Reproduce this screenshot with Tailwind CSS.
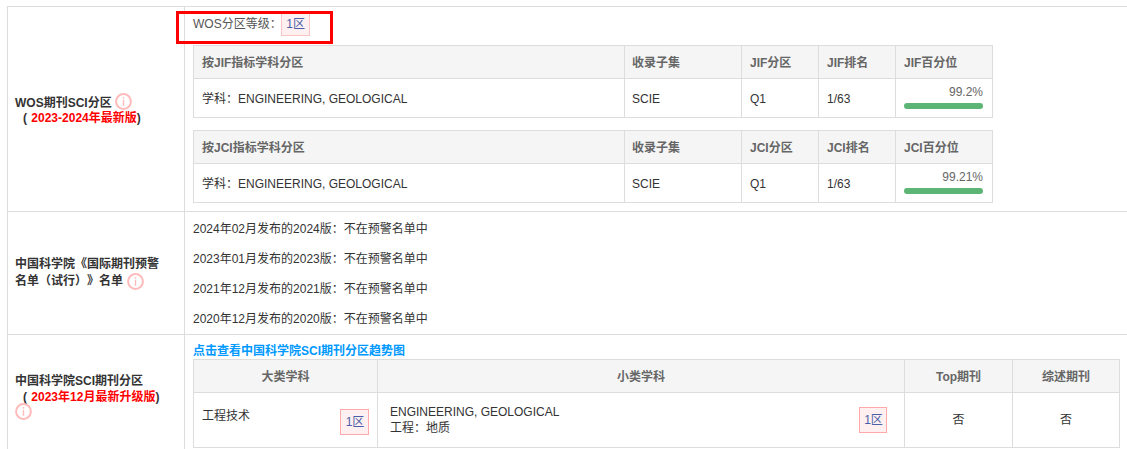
<!DOCTYPE html>
<html lang="zh"><head><meta charset="utf-8"><script src="https://cdn.jsdelivr.net/npm/@tailwindcss/browser@4"></script></head>
<body class="bg-white overflow-hidden h-[449px] text-[12px] text-[#333] font-['Liberation_Sans','Noto_Sans_CJK_SC',sans-serif]">
<div class="ml-[7px] pt-[6px]">
  <div class="flex h-[206px] border-y border-l border-[#ddd] box-border">
    <div class="w-[177px] shrink-0 border-r border-[#ddd] pl-[7px] flex flex-col justify-center font-bold leading-[16px] pt-[2px]">
      <div class="flex items-center">WOS期刊SCI分区<svg class="ml-[3px] -mt-[2px]" width="17" height="17" viewBox="0 0 17 17"><circle cx="8.5" cy="8.5" r="7.4" fill="none" stroke="#fbb" stroke-width="2"/><rect x="7.8" y="4" width="1.4" height="1.6" fill="#fbb"/><rect x="7.8" y="6.8" width="1.4" height="6" fill="#fbb"/></svg></div>
      <div class="pl-[8px] -mt-[1px]">( <span class="text-[#f00] ml-[1px]">2023-2024年最新版</span>)</div>
    </div>
    <div class="pl-[8px] flex-1 min-w-0">
      <div class="relative flex items-center h-[28px] mt-[3px] text-[#555]"><span>WOS分区等级：</span><span class="-ml-[1px] pl-[1px] border border-[#fbc4c4] bg-[#fef0f0] text-[#4b5fa8] h-[23px] w-[29px] flex items-center justify-center">1区</span>
        <div class="absolute left-[-17px] top-[1px] w-[157px] h-[33px] border-[3px] border-[#f00]"></div>
      </div>
      <div class="mt-[7px] w-[799px]">
        <table class="table-fixed border-collapse w-[799px]"><colgroup><col class="w-[431px]"><col class="w-[117px]"><col class="w-[77px]"><col class="w-[77px]"><col class="w-[97px]"></colgroup>
          <tr class="h-[33px] bg-[#f5f5f5] text-[#666] font-bold"><td class="border border-[#ddd] pl-[8px] pr-[7px] pt-[2px]">按JIF指标学科分区</td><td class="border border-[#ddd] px-[7px] pt-[2px]">收录子集</td><td class="border border-[#ddd] px-[8px] pt-[2px]">JIF分区</td><td class="border border-[#ddd] px-[8px] pt-[2px]">JIF排名</td><td class="border border-[#ddd] px-[8px] pt-[2px]">JIF百分位</td></tr>
          <tr class="h-[39px]"><td class="border border-[#ddd] pl-[8px] pr-[7px] pt-[2px]">学科：ENGINEERING, GEOLOGICAL</td><td class="border border-[#ddd] px-[7px] pt-[2px]">SCIE</td><td class="border border-[#ddd] px-[8px] pt-[2px]">Q1</td><td class="border border-[#ddd] px-[8px] pt-[2px]">1/63</td><td class="border border-[#ddd] pl-[8px] pr-[9px]"><div class="text-right text-[#666] leading-[14px] -mt-[3px]">99.2%</div><div class="h-[6px] mt-[4px] rounded-[3px] bg-[#5cb574] w-[79px]"></div></td></tr>
        </table>
        <table class="table-fixed border-collapse w-[799px] mt-[12px]"><colgroup><col class="w-[431px]"><col class="w-[117px]"><col class="w-[77px]"><col class="w-[77px]"><col class="w-[97px]"></colgroup>
          <tr class="h-[33px] bg-[#f5f5f5] text-[#666] font-bold"><td class="border border-[#ddd] pl-[8px] pr-[7px] pt-[2px]">按JCI指标学科分区</td><td class="border border-[#ddd] px-[7px] pt-[2px]">收录子集</td><td class="border border-[#ddd] px-[8px] pt-[2px]">JCI分区</td><td class="border border-[#ddd] px-[8px] pt-[2px]">JCI排名</td><td class="border border-[#ddd] px-[8px] pt-[2px]">JCI百分位</td></tr>
          <tr class="h-[39px]"><td class="border border-[#ddd] pl-[8px] pr-[7px] pt-[2px]">学科：ENGINEERING, GEOLOGICAL</td><td class="border border-[#ddd] px-[7px] pt-[2px]">SCIE</td><td class="border border-[#ddd] px-[8px] pt-[2px]">Q1</td><td class="border border-[#ddd] px-[8px] pt-[2px]">1/63</td><td class="border border-[#ddd] pl-[8px] pr-[9px]"><div class="text-right text-[#666] leading-[14px] -mt-[3px]">99.21%</div><div class="h-[6px] mt-[4px] rounded-[3px] bg-[#5cb574] w-[79px]"></div></td></tr>
        </table>
      </div>
    </div>
  </div>
  <div class="flex h-[123px] border-b border-l border-[#ddd] box-border">
    <div class="w-[177px] shrink-0 border-r border-[#ddd] pl-[7px] flex flex-col justify-center font-bold leading-[17px] [text-spacing-trim:space-all]">
      <div>中国科学院《国际期刊预警</div>
      <div class="flex items-center">名单（试行）》名单<svg class="ml-[4px]" width="17" height="17" viewBox="0 0 17 17"><circle cx="8.5" cy="8.5" r="7.4" fill="none" stroke="#fbb" stroke-width="2"/><rect x="7.8" y="4" width="1.4" height="1.6" fill="#fbb"/><rect x="7.8" y="6.8" width="1.4" height="6" fill="#fbb"/></svg></div>
    </div>
    <div class="pl-[8px] flex-1 flex flex-col gap-[14px] pt-[9px] leading-[16px]">
      <div>2024年02月发布的2024版：不在预警名单中</div>
      <div>2023年01月发布的2023版：不在预警名单中</div>
      <div>2021年12月发布的2021版：不在预警名单中</div>
      <div>2020年12月发布的2020版：不在预警名单中</div>
    </div>
  </div>
  <div class="flex h-[120px] border-l border-[#ddd] box-border">
    <div class="w-[177px] shrink-0 border-r border-[#ddd] pl-[7px] pt-[38px] font-bold leading-[16px]">
      <div>中国科学院SCI期刊分区</div>
      <div class="pl-[8px]">( <span class="text-[#f00] ml-[1px]">2023年12月最新升级版</span>)</div>
      <svg class="block -mt-[2px]" width="17" height="17" viewBox="0 0 17 17"><circle cx="8.5" cy="8.5" r="7.4" fill="none" stroke="#fbb" stroke-width="2"/><rect x="7.8" y="4" width="1.4" height="1.6" fill="#fbb"/><rect x="7.8" y="6.8" width="1.4" height="6" fill="#fbb"/></svg>
    </div>
    <div class="pl-[8px] flex-1 min-w-0">
      <div class="font-bold text-[#0099ff] leading-[15px] pt-[9px]">点击查看中国科学院SCI期刊分区趋势图</div>
      <table class="table-fixed border-collapse w-[926px]"><colgroup><col class="w-[184px]"><col class="w-[527px]"><col class="w-[108px]"><col class="w-[107px]"></colgroup>
        <tr class="h-[33px] bg-[#f5f5f5] text-[#666] font-bold text-center"><td class="border border-[#ddd] pt-[2px]">大类学科</td><td class="border border-[#ddd] pt-[2px]">小类学科</td><td class="border border-[#ddd] pt-[2px]">Top期刊</td><td class="border border-[#ddd] pt-[2px]">综述期刊</td></tr>
        <tr class="h-[55px]">
          <td class="border border-[#ddd] pl-[8px] pr-[8px]"><div class="flex justify-between"><span class="leading-[16px] mt-[3px]">工程技术</span><span class="border border-[#ffaaaa] bg-[#fef0f0] text-[#4b5fa8] h-[26px] w-[29px] pl-[1px] flex items-center justify-center mt-[4px]">1区</span></div></td>
          <td class="border border-[#ddd] pl-[12px] pr-[17px]"><div class="flex justify-between items-center"><div class="leading-[16px]"><div>ENGINEERING, GEOLOGICAL</div><div>工程：地质</div></div><span class="border border-[#ffaaaa] bg-[#fef0f0] text-[#4b5fa8] h-[26px] w-[28px] pl-[1px] flex items-center justify-center">1区</span></div></td>
          <td class="border border-[#ddd] text-center">否</td><td class="border border-[#ddd] text-center">否</td>
        </tr>
      </table>
    </div>
  </div>
</div>
</body></html>
